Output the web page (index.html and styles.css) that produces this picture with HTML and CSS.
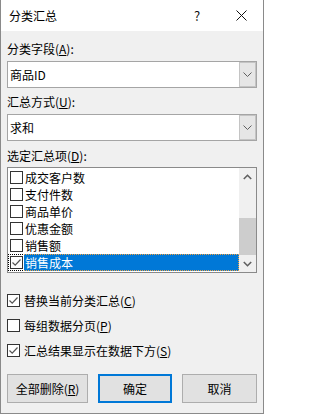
FILE: index.html
```html
<!DOCTYPE html>
<html lang="zh-CN">
<head>
<meta charset="utf-8">
<title>分类汇总</title>
<link rel="stylesheet" href="styles.css">
</head>
<body>
<div class="dialog">
  <div class="titlebar">
    <span class="title">分类汇总</span>
    <span class="help">?</span>
    <span class="close"><svg width="11" height="11" viewBox="0 0 11 11"><path d="M0.5 0.5L10.5 10.5M10.5 0.5L0.5 10.5" stroke="#111" stroke-width="1" fill="none"/></svg></span>
  </div>
  <div class="body">
    <div class="label lbl1">分类字段(<u>A</u>):</div>
    <div class="combo">
      <span class="combo-text">商品ID</span>
      <span class="combo-btn"><svg width="9" height="5" viewBox="0 0 9 5"><path d="M0.5 0.5L4.5 4.5L8.5 0.5" stroke="#606060" stroke-width="1" fill="none"/></svg></span>
    </div>
    <div class="label lbl2">汇总方式(<u>U</u>):</div>
    <div class="combo">
      <span class="combo-text">求和</span>
      <span class="combo-btn"><svg width="9" height="5" viewBox="0 0 9 5"><path d="M0.5 0.5L4.5 4.5L8.5 0.5" stroke="#606060" stroke-width="1" fill="none"/></svg></span>
    </div>
    <div class="label lbl3">选定汇总项(<u>D</u>):</div>
    <div class="listbox">
      <div class="items">
        <div class="item"><span class="box"></span><span class="item-text">成交客户数</span></div>
        <div class="item"><span class="box"></span><span class="item-text">支付件数</span></div>
        <div class="item"><span class="box"></span><span class="item-text">商品单价</span></div>
        <div class="item"><span class="box"></span><span class="item-text">优惠金额</span></div>
        <div class="item"><span class="box"></span><span class="item-text">销售额</span></div>
        <div class="item sel"><span class="box checked"><svg width="11" height="11" viewBox="0 0 11 11"><path d="M1.5 5.5L4.2 8.2L9.5 2.5" stroke="#555" stroke-width="1.2" fill="none"/></svg></span><span class="item-text">销售成本</span></div>
      </div>
      <div class="scroll">
        <div class="arrow"><svg width="9" height="6" viewBox="0 0 9 6"><path d="M0.8 5L4.5 1.3L8.2 5" stroke="#606060" stroke-width="1.6" fill="none"/></svg></div>
        <div class="track"><div class="thumb"></div></div>
        <div class="arrow"><svg width="9" height="6" viewBox="0 0 9 6"><path d="M0.8 1L4.5 4.7L8.2 1" stroke="#606060" stroke-width="1.6" fill="none"/></svg></div>
      </div>
    </div>
    <div class="checks">
      <div class="check-row"><span class="box checked"><svg width="11" height="11" viewBox="0 0 11 11"><path d="M1.5 5.5L4.2 8.2L9.5 2.5" stroke="#555" stroke-width="1.2" fill="none"/></svg></span><span>替换当前分类汇总(<u>C</u>)</span></div>
      <div class="check-row"><span class="box"></span><span>每组数据分页(<u>P</u>)</span></div>
      <div class="check-row"><span class="box checked"><svg width="11" height="11" viewBox="0 0 11 11"><path d="M1.5 5.5L4.2 8.2L9.5 2.5" stroke="#555" stroke-width="1.2" fill="none"/></svg></span><span>汇总结果显示在数据下方(<u>S</u>)</span></div>
    </div>
    <div class="buttons">
      <div class="btn">全部删除(<u>R</u>)</div>
      <div class="btn default">确定</div>
      <div class="btn">取消</div>
    </div>
  </div>
</div>
</body>
</html>
```

FILE: styles.css
```css
html, body {
  margin: 0;
  padding: 0;
  background: #ffffff;
}
body {
  font-family: "Noto Sans CJK SC", "Liberation Sans", sans-serif;
  font-size: 12px;
  color: #000;
}
.dialog {
  width: 264px;
  height: 414px;
  box-sizing: border-box;
  border: 1px solid #8a8a8a;
  border-top: none;
  background: #f0f0f0;
  display: flex;
  flex-direction: column;
}
.titlebar {
  height: 31px;
  background: #ffffff;
  display: flex;
  align-items: center;
  flex: none;
}
.title {
  padding-left: 8px;
  flex: 1;
  font-size: 12px;
}
.help {
  width: 44px;
  text-align: center;
  font-size: 13px;
  color: #111;
}
.close {
  width: 44px;
  height: 31px;
  display: flex;
  align-items: center;
  justify-content: center;
}
.body {
  padding: 0 6px;
  display: flex;
  flex-direction: column;
}
.label {
  height: 17px;
  line-height: 17px;
}
.lbl1 { margin-top: 9px; }
.lbl2 { margin-top: 5px; }
.lbl3 { margin-top: 6px; }
.combo {
  margin-top: 4px;
  height: 27px;
  box-sizing: border-box;
  border: 1px solid #a5a5a5;
  background: #ffffff;
  display: flex;
}
.combo-text {
  flex: 1;
  padding-left: 2px;
  line-height: 25px;
}
.combo-btn {
  width: 17px;
  box-sizing: border-box;
  border: 1px solid #c4c4c4;
  background: #e6e6e6;
  display: flex;
  align-items: center;
  justify-content: center;
}
.listbox {
  margin-top: 3px;
  height: 106px;
  box-sizing: border-box;
  border: 1px solid #8a8a8a;
  background: #ffffff;
  display: flex;
}
.items {
  flex: 1;
  padding-top: 1px;
  display: flex;
  flex-direction: column;
}
.item {
  height: 17px;
  box-sizing: border-box;
  border: 1px dotted transparent;
  padding-left: 1px;
  display: flex;
  align-items: center;
}
.item .box {
  margin-right: 1px;
}
.item-text {
  padding-left: 1px;
  line-height: 15px;
}
.item.sel {
  border-color: #000;
}
.item.sel .item-text {
  flex: 1;
  align-self: stretch;
  margin: -1px -1px -1px 0;
  border: 1px dotted #f0a040;
  border-left: none;
  background: #0078d7;
  color: #ffffff;
}
.box {
  width: 13px;
  height: 13px;
  box-sizing: border-box;
  border: 1px solid #333333;
  background: #ffffff;
  flex: none;
  display: flex;
  align-items: center;
  justify-content: center;
}
.scroll {
  width: 17px;
  background: #f0f0f0;
  display: flex;
  flex-direction: column;
}
.arrow {
  height: 17px;
  display: flex;
  align-items: center;
  justify-content: center;
  flex: none;
}
.track {
  flex: 1;
  display: flex;
  flex-direction: column;
  justify-content: flex-end;
}
.thumb {
  height: 37px;
  background: #cdcdcd;
}
.checks {
  margin-top: 15px;
  display: flex;
  flex-direction: column;
  gap: 1px;
}
.check-row {
  height: 24px;
  display: flex;
  align-items: center;
  gap: 4px;
}
.buttons {
  margin-top: 12px;
  display: grid;
  grid-template-columns: 81px 74px 75px;
  column-gap: 10px;
}
.btn {
  height: 29px;
  box-sizing: border-box;
  border: 1px solid #adadad;
  background: #e1e1e1;
  display: flex;
  align-items: center;
  justify-content: center;
}
.btn.default {
  border: 2px solid #0078d7;
}
```
